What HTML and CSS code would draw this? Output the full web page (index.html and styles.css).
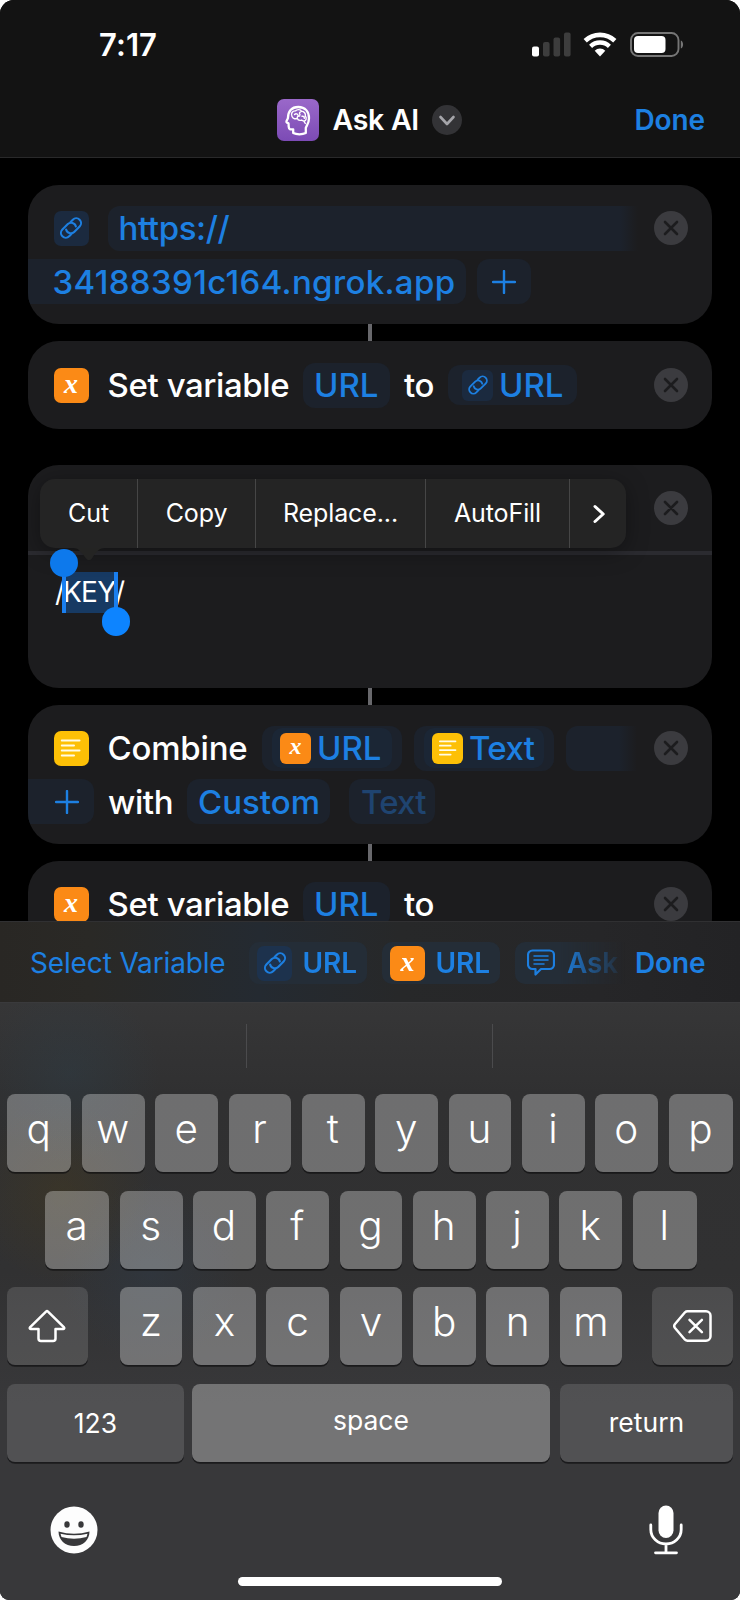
FILE: index.html
```html
<!DOCTYPE html>
<html lang="en">
<head>
<meta charset="utf-8">
<title>Ask AI</title>
<link rel="stylesheet" href="styles.css">
</head>
<body>
<svg width="0" height="0" class="defs">
  <symbol id="link" viewBox="0 0 34 34">
    <g fill="none" stroke="#1d7fe0" stroke-width="2.100" stroke-linecap="round" stroke-linejoin="round" transform="rotate(-45 17 17)">
      <path d="M13 21.600H9.800a4.800 4.800 0 0 1 0-9.600h7.700a4.800 4.800 0 0 1 4 7.400"/>
      <path d="M21 12.400h3.200a4.800 4.800 0 0 1 0 9.600h-7.700a4.800 4.800 0 0 1-4-7.400"/>
    </g>
  </symbol>
  <symbol id="lines" viewBox="0 0 34 34">
    <path d="M7.800 9.400H25.500M7.800 14.400H20M7.800 19.400H25.500M7.800 24.500H20" stroke="#fffbe6" stroke-width="2" stroke-linecap="round"/>
  </symbol>
  <symbol id="close" viewBox="0 0 34 34">
    <circle cx="17" cy="17" r="17" fill="#3b3b3f"/>
    <path d="M11 11l12 12M23 11L11 23" stroke="#1c1c1e" stroke-width="2.600" stroke-linecap="round"/>
  </symbol>
  <symbol id="plus" viewBox="0 0 24 24">
    <path d="M12 1v22M1 12h22" stroke="#1d80e2" stroke-width="2.400" stroke-linecap="round"/>
  </symbol>
</svg>

<div class="screen">
  <header class="header">
    <div class="status">
      <span class="time">7:17</span>
      <svg class="signal" width="39" height="25" viewBox="0 0 39 25">
        <rect x="0" y="14.500" width="7" height="10" rx="2" fill="#fff"/>
        <rect x="11" y="10" width="6.600" height="14.500" rx="2" fill="#3d3d3d"/>
        <rect x="21.500" y="5.500" width="6.600" height="19" rx="2" fill="#3d3d3d"/>
        <rect x="32" y="0.500" width="6.600" height="24" rx="2" fill="#3d3d3d"/>
      </svg>
      <svg class="wifi" width="34" height="25" viewBox="0 0 34 25">
        <path d="M2.200 8.700a21.500 21.500 0 0 1 29.600 0" fill="none" stroke="#fff" stroke-width="4.700"/>
        <path d="M7.600 14.300a13.600 13.600 0 0 1 18.800 0" fill="none" stroke="#fff" stroke-width="4.400"/>
        <path d="M11.700 18.700a7.700 7.700 0 0 1 10.600 0L17 24.400z" fill="#fff"/>
      </svg>
      <svg class="battery" width="54" height="25" viewBox="0 0 54 25">
        <rect x="1" y="1" width="47.500" height="23" rx="7" fill="none" stroke="#767676" stroke-width="1.900"/>
        <rect x="4" y="4" width="31.500" height="17" rx="4" fill="#fff"/>
        <path d="M50.800 8.500c3 .8 3 7.200 0 8z" fill="#767676"/>
      </svg>
    </div>
    <nav class="nav">
      <svg class="appicon" width="42" height="42" viewBox="0 0 42 42">
        <defs><linearGradient id="purple" x1="0" y1="0" x2="0" y2="1"><stop offset="0" stop-color="#9a68c9"/><stop offset="1" stop-color="#7c4bb5"/></linearGradient></defs>
        <rect width="42" height="42" rx="7" fill="url(#purple)"/>
        <path d="M16.200 34v-3.700c-2.800.5-4.400 0-4.500-2.700l-.2-3.300-1.600-.7c-1-.6-.5-1.500 1-4.400C11 12.500 14.500 8 21.300 8c7 0 10.700 4.800 10.700 11.200 0 5-2.300 7.300-3.200 9.600V34c-3.500 1.700-9.300 1.700-12.600 0z" fill="none" stroke="#fff" stroke-width="2.300" stroke-linejoin="round"/>
        <path d="M15 17.500c-1.500-3 .5-5.800 3.400-5.600 2-2 5-1.500 6 .2 2.800.2 4.500 2.500 3.900 4.900 1.600 1.800 1 4.700-1.300 5.300l1.300 2.200M15 17.500c1.200 2.600 3.700 2.700 5.200 1.800.6 1.600 2.600 2.300 4.300 1.800M17.500 15.500c1.300-1.200 3-.8 3.500.7M24.400 12.300c-2 .6-2.400 2.300-1.400 3.400M20.200 19.300c-.2-1.500.8-2.500 2.500-2.300M25 17.300c1.500-.3 2.500.5 2.300 2M26.900 22.200l-2.400-1.100" fill="none" stroke="#fff" stroke-width="1.400" stroke-linecap="round" stroke-linejoin="round"/>
      </svg>
      <h1 class="title">Ask AI</h1>
      <svg class="chev" width="30" height="30" viewBox="0 0 30 30">
        <circle cx="15" cy="15" r="15" fill="#333336"/>
        <path d="M8.500 12l6.500 7 6.500-7" fill="none" stroke="#a5a5aa" stroke-width="2.600" stroke-linecap="round" stroke-linejoin="round"/>
      </svg>
      <span class="done">Done</span>
    </nav>
  </header>

  <main class="flow">
    <section class="card two">
      <div class="row">
        <span class="tile blue"><svg width="34" height="34"><use href="#link"/></svg></span>
        <span class="pill open wide">https://</span>
        <svg class="x" width="34" height="34"><use href="#close"/></svg>
      </div>
      <div class="row second">
        <span class="pill bleed host">34188391c164.ngrok.app</span>
        <span class="pill plus"><svg width="24" height="24"><use href="#plus"/></svg></span>
      </div>
    </section>
    <i class="wire"></i>
    <section class="card one">
      <div class="row">
        <span class="tile orange">x</span>
        <span class="word set">Set variable</span>
        <span class="pill url">URL</span>
        <span class="word to">to</span>
        <span class="pill token"><span class="mini blue"><svg width="30" height="30"><use href="#link"/></svg></span><span>URL</span></span>
        <svg class="x" width="34" height="34"><use href="#close"/></svg>
      </div>
    </section>

    <section class="card text">
      <div class="texthead"><svg class="x" width="34" height="34"><use href="#close"/></svg></div>
      <div class="field"><span>/</span><span class="sel">KEY<i class="bar start"></i><i class="bar end"></i></span><span class="slash">/</span></div>
      <div class="menu">
        <span class="cut">Cut</span><span class="copy">Copy</span><span class="replace">Replace...</span><span class="autofill">AutoFill</span>
        <span class="more"><svg width="14" height="22" viewBox="0 0 14 22"><path d="M3 3.500l8.200 7.500L3 18.500" fill="none" stroke="#fff" stroke-width="3" stroke-linecap="round" stroke-linejoin="round"/></svg></span>
        <svg class="tip" width="32" height="13" viewBox="0 0 32 13"><path d="M0 0c5 0 8 3 13 10.500q3 3.500 6 0C23 3 27 0 32 0z" fill="#242423"/></svg>
      </div>
      <i class="knob first"></i>
    </section>
    <i class="wire"></i>
    <section class="card two">
      <div class="row">
        <span class="tile yellow"><svg width="34" height="34"><use href="#lines"/></svg></span>
        <span class="word combine">Combine</span>
        <span class="pill var"><span class="inner"><span class="mini orange">x</span><span>URL</span></span></span>
        <span class="pill var"><span class="inner"><span class="mini yellow"><svg width="30" height="30"><use href="#lines"/></svg></span><span>Text</span></span></span>
        <span class="pill open stub"></span>
        <svg class="x" width="34" height="34"><use href="#close"/></svg>
      </div>
      <div class="row second">
        <span class="pill bleed plusleft"><svg width="24" height="24"><use href="#plus"/></svg></span>
        <span class="word with">with</span>
        <span class="pill custom">Custom</span>
        <span class="pill dim">Text</span>
      </div>
    </section>
    <i class="wire"></i>
    <section class="card one last">
      <div class="row">
        <span class="tile orange">x</span>
        <span class="word set">Set variable</span>
        <span class="pill url">URL</span>
        <span class="word to">to</span>
        <svg class="x" width="34" height="34"><use href="#close"/></svg>
      </div>
    </section>
  </main>

  <div class="toolbar">
    <span class="select">Select Variable</span>
    <div class="chips">
      <span class="chip"><span class="tile blue"><svg width="34" height="34"><use href="#link"/></svg></span><b>URL</b></span>
      <span class="chip"><span class="tile orange">x</span><b>URL</b></span>
      <span class="chip ask">
        <svg width="28" height="28" viewBox="0 0 28 28"><path d="M5.500 1.500h17a4.500 4.500 0 0 1 4.500 4.500v9.500a4.500 4.500 0 0 1-4.500 4.500H14l-5.500 5.500V20h-3A4.500 4.500 0 0 1 1 15.500V6a4.500 4.500 0 0 1 4.500-4.500z" fill="none" stroke="#1d7fe0" stroke-width="2.200" stroke-linejoin="round"/><path d="M7 7h14M7 11h14M7 15h10" stroke="#1d7fe0" stroke-width="1.500" stroke-linecap="round"/></svg>
        <b>Ask</b></span>
    </div>
    <span class="done">Done</span>
  </div>

  <div class="keyboard">
    <div class="suggest"><i></i><i></i><i></i></div>
    <div class="keys r1"><kbd>q</kbd><kbd>w</kbd><kbd>e</kbd><kbd>r</kbd><kbd>t</kbd><kbd>y</kbd><kbd>u</kbd><kbd>i</kbd><kbd>o</kbd><kbd>p</kbd></div>
    <div class="keys r2"><kbd>a</kbd><kbd>s</kbd><kbd>d</kbd><kbd>f</kbd><kbd>g</kbd><kbd>h</kbd><kbd>j</kbd><kbd>k</kbd><kbd>l</kbd></div>
    <div class="keys r3">
      <kbd class="dark"><svg width="38" height="34" viewBox="0 0 38 34"><path d="M18 2.600q1-.9 2 0L35.800 18.100q1.200 1.600-.6 1.900H27.500v9.500q0 2.500-2.500 2.500H13q-2.500 0-2.500-2.500V20H2.800q-1.800-.3-.6-1.900z" fill="none" stroke="#fff" stroke-width="2.500" stroke-linejoin="round"/></svg></kbd>
      <div class="mid"><kbd>z</kbd><kbd>x</kbd><kbd>c</kbd><kbd>v</kbd><kbd>b</kbd><kbd>n</kbd><kbd>m</kbd></div>
      <kbd class="dark"><svg width="39" height="32" viewBox="0 0 39 32"><path d="M14.500 1.300H33a4.500 4.500 0 0 1 4.500 4.500v20.400a4.500 4.500 0 0 1-4.500 4.500H14.500q-1.500 0-2.500-1L2 18q-1.600-2 0-4L12 2.300q1-1 2.500-1z" fill="none" stroke="#fff" stroke-width="2.500" stroke-linejoin="round"/><path d="M16.500 9.800l12.400 12.400M28.900 9.800L16.500 22.200" stroke="#fff" stroke-width="2.500" stroke-linecap="round"/></svg></kbd>
    </div>
    <div class="keys r4"><kbd class="dark num">123</kbd><kbd class="space">space</kbd><kbd class="dark ret">return</kbd></div>
    <div class="bottom">
      <svg width="48" height="48" viewBox="0 0 48 48"><circle cx="24" cy="24" r="23.500" fill="#fdfdfd"/><ellipse cx="17" cy="18.500" rx="2.700" ry="3.200" fill="#38383a"/><ellipse cx="31" cy="18.500" rx="2.700" ry="3.200" fill="#38383a"/><path d="M8.500 25.500q15.500 4.500 31 0c0 8.500-6.500 14.500-15.500 14.500S8.500 34 8.500 25.500z" fill="#38383a"/><path d="M10.500 27.700q13.500 3.200 27 0l-1 3.300q-12.500 3.500-25 0z" fill="#fdfdfd"/></svg>
      <svg width="34" height="50" viewBox="0 0 34 50"><rect x="9.500" y="0.500" width="15" height="32.500" rx="7.500" fill="#fff"/><path d="M1.800 20v4.500a15.200 14.500 0 0 0 30.400 0V20M17 39.500v8M6.500 47.800h21" fill="none" stroke="#fff" stroke-width="2.800" stroke-linecap="round"/></svg>
    </div>
    <i class="home"></i>
  </div>
</div>
</body>
</html>
```

FILE: styles.css
```css
* { box-sizing: border-box; }
body { margin: 0; background: #fff; }
.defs { position: absolute; }
svg { display: block; flex: none; }

.screen {
  width: 740px;
  height: 1600px;
  display: flex;
  flex-direction: column;
  background: #000;
  border-radius: 14px 14px 9px 9px;
  overflow: hidden;
  font-family: Inter, "Liberation Sans", sans-serif;
  color: #fff;
  white-space: nowrap;
}

/* Header */
.header { height: 158px; background: #131313; border-bottom: 1px solid #29292a; }
.status { display: flex; height: 88px; padding: 0 56px 0 99px; align-items: center; }
.time { flex: 1; font-size: 31px; font-weight: 600; line-height: 88px; padding-top: 1px; letter-spacing: 0.1px; }
.wifi { margin-left: 12px; }
.battery { margin-left: 13px; }
.nav { display: flex; align-items: center; height: 64px; padding: 0 34.500px 0 276.500px; }
.title { margin: -2px 0 0 14px; width: 99px; font-size: 28.500px; font-weight: 570; letter-spacing: -0.3px; }
.done { margin-left: auto; width: 71px; font-size: 28px; font-weight: 600; color: #1d80e2; letter-spacing: -0.1px; }
.nav .done { margin-top: -1px; }

/* Action list */
.flow { height: 763px; padding: 27px 28px 0; overflow: hidden; display: flex; flex-direction: column; align-items: center; }
.card { flex: none; width: 684px; background: #1c1c1e; border-radius: 31px; overflow: hidden; font-size: 33px; font-weight: 480; letter-spacing: -0.4px; }
.card.two { height: 138.500px; padding-top: 20px; }
.card.one { height: 88px; padding-top: 21.500px; }
.card.last { padding-top: 20.500px; }
.wire { flex: none; width: 4px; height: 17.500px; background: #68686c; }
.row { display: flex; align-items: center; height: 46px; padding: 0 24px 0 25.500px; }
.card.one .row { height: 45px; }
.row.second { margin-top: 8px; height: 45px; padding-left: 0; }
.x { margin-left: auto; }

.tile, .mini { flex: none; display: flex; align-items: center; justify-content: center; font-family: "Liberation Serif", serif; font-style: italic; font-weight: 700; letter-spacing: 0; color: #fff; }
.tile { width: 35px; height: 35px; border-radius: 7px; font-size: 28px; padding-bottom: 3px; }
.mini { width: 31px; height: 31px; border-radius: 6px; font-size: 24px; padding-bottom: 3px; }
.tile:has(svg), .mini:has(svg) { padding-bottom: 0; }
.blue { background: #1b2a3f; }
.orange { background: #fb8a16; }
.yellow { background: #fdc006; }

.pill { flex: none; display: flex; align-items: center; height: 45px; border-radius: 12px; background: #1c222c; color: #1d80e2; }
.pill.open { border-radius: 12px 0 0 12px; background: linear-gradient(90deg, #1c222c calc(100% - 18px), #1c1c1e); }
.pill.bleed { border-radius: 0 12px 12px 0; }
.wide { margin-left: 19px; width: 530px; padding-left: 11px; }
.host { width: 438px; padding-left: 24.500px; letter-spacing: 0.35px; }
.pill.plus { margin-left: 11px; width: 54px; justify-content: center; }
.word { flex: none; }
.set { margin-left: 19px; width: 195.500px; }
.url { width: 87px; padding-left: 11px; letter-spacing: 0; }
.to { margin-left: 14px; width: 44px; }
.token { width: 129px; height: 40px; padding-left: 14px; gap: 6px; letter-spacing: 0; }

.combine { margin-left: 19px; width: 154.500px; letter-spacing: -0.2px; }
.var { width: 140px; padding-left: 10px; margin-right: 12px; letter-spacing: 0; }
.inner { display: flex; align-items: center; width: 120px; height: 40px; padding-left: 8px; gap: 6px; border-radius: 10px; background: #1b2635; }
.var .yellow + span { letter-spacing: -0.6px; }
.stub { width: 71px; }
.plusleft { width: 66px; padding-left: 27px; }
.with { margin-left: 14px; width: 79px; }
.custom { width: 143px; padding-left: 11px; letter-spacing: 0; }
.dim { margin-left: 19px; width: 86px; padding-left: 12px; color: #1f4470; letter-spacing: -0.8px; }

/* Text action */
.card.text { position: relative; margin-top: 35.500px; height: 223px; overflow: visible; }
.texthead { display: flex; align-items: center; height: 90.500px; padding: 1px 24px 0 0; border-bottom: 4px solid #2b2b30; }
.field { display: flex; align-items: center; margin-top: 16.500px; padding-left: 27px; height: 41px; font-size: 28px; font-weight: 400; letter-spacing: -0.7px; }
.sel { position: relative; height: 41px; line-height: 41px; width: 54.500px; margin-left: -1.500px; background: #173a63; }
.slash { margin-left: -2.500px; }
.bar { position: absolute; top: 0; width: 4px; height: 41px; background: #1a7ff0; }
.bar.start { left: -1px; }
.bar.end { right: -1px; }
.bar.end::after { content: ""; position: absolute; left: -12.500px; top: 35.500px; width: 28.500px; height: 28.500px; border-radius: 50%; background: #0d84ff; }
.knob { position: absolute; width: 28.500px; height: 28.500px; border-radius: 50%; background: #0d79ec; }
.knob.first { left: 21.700px; top: 84px; }
.menu { position: absolute; left: 12px; top: 14.500px; width: 586px; height: 69px; display: flex; border-radius: 15px; background: #242424; box-shadow: 0 4px 22px rgba(0, 0, 0, .35); font-size: 25px; font-weight: 400; line-height: 69px; letter-spacing: -0.1px; }
.menu span { border-left: 1.500px solid #464646; text-align: center; }
.menu .cut { width: 97px; border-left: 0; }
.copy { width: 118px; }
.replace { width: 170px; }
.autofill { width: 144px; }
.menu .more { flex: 1; display: flex; align-items: center; justify-content: center; padding-left: 2px; }
.tip { position: absolute; left: 33px; top: 69px; }

/* Variable bar */
.toolbar { position: relative; flex: none; display: flex; align-items: center; height: 81px; padding: 2px 34px 0 30px; border-top: 1px solid #303032; background: linear-gradient(90deg, #292724 0, #2a2926 90px, #242a31 260px, #272829 400px, #262628 600px, #232325); }
.select { width: 219px; font-size: 28px; color: #1d80e2; letter-spacing: -0.15px; }
.chips { display: flex; gap: 15px; width: 376px; overflow: hidden; -webkit-mask-image: linear-gradient(90deg, #000 310px, transparent 376px); mask-image: linear-gradient(90deg, #000 310px, transparent 376px); }
.chip { flex: none; display: flex; align-items: center; width: 118px; height: 42px; padding-left: 8px; gap: 10.500px; border-radius: 10px; background: #242d37; color: #1d80e2; font-size: 28px; letter-spacing: -0.1px; }
.chip b { font-weight: 600; }
.chip .blue { background: #1d324d; }
.chip.ask { padding-left: 12px; gap: 12px; }

/* Keyboard */
.keyboard { position: relative; flex: none; height: 598px; border-top: 1px solid #3a3a3c; background:
  radial-gradient(circle at 70px 70px, rgba(44, 66, 80, .3), transparent 90px),
  radial-gradient(circle at 62px 190px, rgba(74, 60, 24, .35), transparent 90px),
  radial-gradient(circle at 150px 270px, rgba(46, 60, 76, .4), transparent 90px),
  linear-gradient(180deg, #363637 0, #303031 90px, #313132 270px, #38383a 400px, #38383a 100%); }
.suggest { display: flex; height: 91px; padding-top: 21px; }
.suggest i { width: 246.500px; height: 44px; border-right: 1.500px solid #4b4b4d; }
.suggest i:last-child { border: 0; }
.keys { display: flex; justify-content: space-between; height: 78px; margin-bottom: 18.700px; padding: 0 7px; }
.r2 { padding: 0 43px 0 45px; }
kbd { flex: none; display: flex; align-items: center; justify-content: center; width: 62.700px; height: 78px; padding-bottom: 8px; border-radius: 8px; background: rgba(255, 255, 255, .3); box-shadow: 0 1.800px 0 rgba(12, 12, 14, .65); font: 340 40.500px/70px Inter, "Liberation Sans", sans-serif; color: #fff; }
.r1 kbd:first-child, .r1 kbd:last-child, .r2 kbd:first-child, .r2 kbd:last-child { width: 64.300px; }
.r1 kbd, .r2 kbd { padding-right: 1px; }
.mid { display: flex; justify-content: space-between; width: 502.500px; margin-left: 2px; }
.dark { width: 81px; padding-bottom: 0; background: rgba(255, 255, 255, .13); }
.r3 > .dark:first-child { padding-right: 2px; }
.r4 kbd { font-size: 26.500px; font-weight: 400; }
.r4 .num { width: 177px; padding-bottom: 1px; }
.r4 .space { width: 358.500px; padding-bottom: 6px; margin-left: -2px; }
.r4 .ret { width: 173px; padding-bottom: 2px; }
.bottom { display: flex; justify-content: space-between; align-items: center; height: 50px; margin-top: 43px; padding: 0 57px 0 49.500px; }
.home { display: block; width: 264px; height: 9px; margin: 22px 0 0 238px; border-radius: 5px; background: #fff; }
```
